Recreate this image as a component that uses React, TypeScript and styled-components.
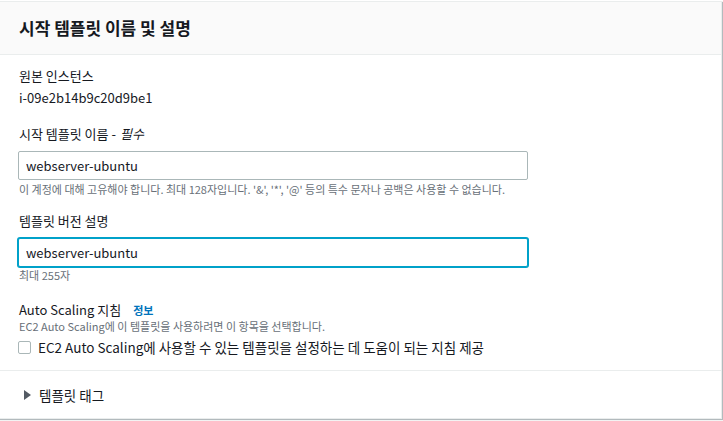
import styled, { createGlobalStyle } from "styled-components";

const GlobalStyle = createGlobalStyle`
  body {
    margin: 0;
    background: #ffffff;
    font-family: "Noto Sans CJK KR", "Noto Sans", sans-serif;
    color: #16191f;
  }
`;

const Page = styled.div`
  padding-top: 1px;
  width: 723px;
  height: 421px;
  box-sizing: border-box;
  overflow: hidden;
`;

const Panel = styled.section`
  width: 721px;
  margin-left: -1px;
  border: 1px solid #eaeded;
  box-shadow: 1px 1px 1px 0 rgba(0, 28, 36, 0.3);
  background: #ffffff;
`;

const Header = styled.div`
  height: 52px;
  display: flex;
  align-items: center;
  padding: 0 19px;
  background: #fafafa;
  border-bottom: 1px solid #eaeded;
`;

const Title = styled.h2`
  margin: 0;
  font-size: 17px;
  font-weight: 700;
  line-height: 22px;
`;

const Body = styled.div`
  display: flex;
  flex-direction: column;
  align-items: flex-start;
  padding: 10px 19px 13px;
  border-bottom: 1px solid #eaeded;
`;

const Label = styled.div<{ $gap?: number; $lh?: number }>`
  margin-top: ${(p) => p.$gap ?? 0}px;
  font-size: 13px;
  line-height: ${(p) => p.$lh ?? 22}px;
  display: flex;
  align-items: center;
  gap: 12px;

  em {
    font-style: italic;
    margin-left: 4px;
  }
`;

const Value = styled.div`
  font-size: 13px;
  line-height: 22px;
`;

const Input = styled.input<{ $focused?: boolean; $gap: number }>`
  box-sizing: border-box;
  width: 510px;
  height: 29px;
  margin: ${(p) => p.$gap}px 0 0 -1px;
  padding: 0 7px;
  font-family: inherit;
  font-size: 13px;
  color: #16191f;
  border: 1px solid ${(p) => (p.$focused ? "#00a1c9" : "#aab7b8")};
  box-shadow: ${(p) => (p.$focused ? "0 0 0 1px #00a1c9" : "none")};
  border-radius: 2px;
  outline: none;
  background: #ffffff;
`;

const Hint = styled.div<{ $gap?: number; $lh?: number }>`
  margin-top: ${(p) => p.$gap ?? 0}px;
  font-size: 11px;
  line-height: ${(p) => p.$lh ?? 16}px;
  color: #687078;
`;

const InfoLink = styled.a`
  font-size: 11px;
  font-weight: 700;
  color: #0073bb;
  text-decoration: none;
`;

const CheckRow = styled.label`
  margin-top: 3px;
  display: flex;
  align-items: center;
  gap: 7px;
  height: 20px;
  font-size: 13.5px;
`;

const Box = styled.span`
  width: 13px;
  height: 13px;
  margin-left: -1px;
  box-sizing: border-box;
  border: 1px solid #aab7b8;
  border-radius: 2px;
  background: #ffffff;
`;

const Footer = styled.div`
  height: 47px;
  display: flex;
  align-items: center;
  gap: 8px;
  padding: 0 24px;
  font-size: 13.5px;
  color: #16191f;
`;

const Caret = styled.span`
  width: 0;
  height: 0;
  border-top: 5px solid transparent;
  border-bottom: 5px solid transparent;
  border-left: 7px solid #545b64;
`;

export default function App() {
  return (
    <Page>
      <GlobalStyle />
      <Panel>
        <Header>
          <Title>시작 템플릿 이름 및 설명</Title>
        </Header>
        <Body>
          <Label>원본 인스턴스</Label>
          <Value>i-09e2b14b9c20d9be1</Value>

          <Label $gap={14}>
            <span>
              시작 템플릿 이름 -<em>필수</em>
            </span>
          </Label>
          <Input $gap={6} defaultValue="webserver-ubuntu" />
          <Hint $gap={1}>
            이 계정에 대해 고유해야 합니다. 최대 128자입니다. '&amp;', '*', '@' 등의 특수 문자나 공백은 사용할 수 없습니다.
          </Hint>

          <Label $gap={13}>템플릿 버전 설명</Label>
          <Input $gap={6} $focused defaultValue="webserver-ubuntu" />
          <Hint>최대 255자</Hint>

          <Label $gap={19} $lh={16}>
            Auto Scaling 지침
            <InfoLink href="#">정보</InfoLink>
          </Label>
          <Hint>EC2 Auto Scaling에 이 템플릿을 사용하려면 이 항목을 선택합니다.</Hint>
          <CheckRow>
            <Box />
            EC2 Auto Scaling에 사용할 수 있는 템플릿을 설정하는 데 도움이 되는 지침 제공
          </CheckRow>
        </Body>
        <Footer>
          <Caret />
          템플릿 태그
        </Footer>
      </Panel>
    </Page>
  );
}
